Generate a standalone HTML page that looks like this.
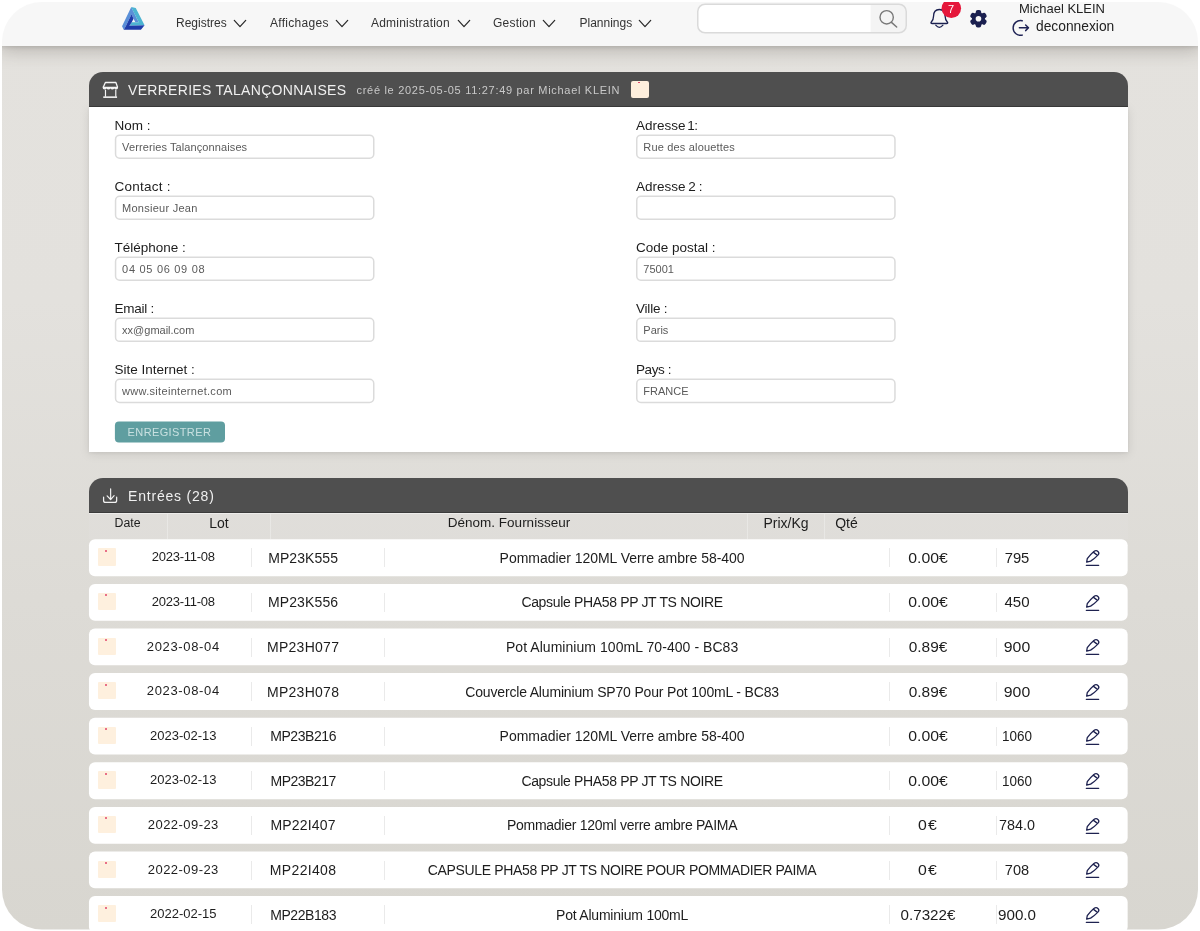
<!DOCTYPE html>
<html lang="fr">
<head>
<meta charset="utf-8">
<title>Verreries Talançonnaises</title>
<style>
*{box-sizing:border-box;margin:0;padding:0}
html,body{width:1200px;height:931px;background:#fff;overflow:hidden}
body{font-family:"Liberation Sans",sans-serif;color:#222;position:relative}
#frame{position:absolute;left:0;top:0;width:1200px;height:931px;
  clip-path:inset(2px 2px 1.4px 2px round 40px);
  background:linear-gradient(180deg,#e4e2de 0,#e3e1dd 300px,#dddbd6 600px,#d8d6d0 931px)}
.abs{position:absolute;white-space:nowrap}
#frame{will-change:transform}
/* navbar */
#nav{position:absolute;left:0;top:0;width:1200px;height:46px;background:#f7f7f7;
  box-shadow:0 1px 4px rgba(0,0,0,.12),0 5px 18px rgba(60,55,45,.26)}
.nv{position:absolute;top:16px;font-size:12px;line-height:15px;color:#333;white-space:nowrap}
.chev{position:absolute;top:19px;width:14px;height:9px}
.chev path{fill:none;stroke:#2a2a2a;stroke-width:1.25;stroke-linecap:round;stroke-linejoin:round}
/* panels */
.phead{position:absolute;left:89px;width:1039px;background:#4f4f4f;border-radius:14px 14px 0 0;border-bottom:1.2px solid #3b3b3b}
.pbody{position:absolute;left:89px;width:1039px;background:#fff;box-shadow:0 2px 10px rgba(0,0,0,.10),0 1px 3px rgba(0,0,0,.06)}
.lbl{position:absolute;font-size:13.5px;line-height:16px;color:#1d1d1d;white-space:nowrap}
.inp{position:absolute;width:260px;height:24px;font-size:11px;line-height:24px;color:#5a5a5a;padding-left:7.3px;white-space:nowrap}
/* table */
.th{position:absolute;top:515.3px;font-size:14px;line-height:16px;color:#1d1d1d;white-space:nowrap;transform:translateX(-50%)}
.row{position:absolute;left:89px;width:1038.5px;height:36.5px}
.row i{position:absolute;left:9px;top:9px;width:17.5px;height:17.3px;background:#fef0de;border-radius:1px}
.row i:after{content:"";position:absolute;left:7.4px;top:1.6px;width:2px;height:2px;border-radius:50%;background:#e2456a}
.row b{position:absolute;top:9px;width:1px;height:19px;background:#eaeaea}
.row span{position:absolute;font-weight:normal;white-space:nowrap;transform:translateX(-50%);color:#1d1d1d}
.row .d{left:94.3px;top:10px;font-size:13px;line-height:15px}
.row .l{left:214.1px;top:10.5px;font-size:14px;line-height:16px}
.row .n{left:533.1px;top:10.5px;font-size:14px;line-height:16px}
.row .p{left:838.8px;top:10.5px;font-size:14px;line-height:16px}
.row .q{left:928.1px;top:10.5px;font-size:14px;line-height:16px}
.row svg{position:absolute;left:981px;top:0.9px;width:50px;height:40px}
</style>
</head>
<body>
<div id="frame">

<!-- NAVBAR -->
<div id="nav">
  <!-- logo: penrose triangle -->
  <svg class="abs" style="left:110px;top:0;width:50px;height:40px" viewBox="0 0 1164 931">
    <polygon fill="#5a8fd8" points="495,165 280,610 320,695 370,605 537,260 502,331 548,438 590,520 669,520 505,185"/>
    <polygon fill="#4db4d2" points="495,165 600,185 805,590 450,600 506,520 669,520 505,190"/>
    <polygon fill="#1f3daa" points="502,331 548,438 506,520 450,600 805,590 720,695 320,695 370,605"/>
  </svg>
  <span class="nv" id="n1" style="left:176px">Registres</span>
  <svg class="chev" style="left:233px" viewBox="0 0 14 9"><path d="M1.3 1.4 L7 7.6 L12.7 1.4"/></svg>
  <span class="nv" id="n2" style="left:270px;letter-spacing:.3px">Affichages</span>
  <svg class="chev" style="left:335px" viewBox="0 0 14 9"><path d="M1.3 1.4 L7 7.6 L12.7 1.4"/></svg>
  <span class="nv" id="n3" style="left:371px;letter-spacing:.2px">Administration</span>
  <svg class="chev" style="left:457px" viewBox="0 0 14 9"><path d="M1.3 1.4 L7 7.6 L12.7 1.4"/></svg>
  <span class="nv" id="n4" style="left:493px;letter-spacing:.22px">Gestion</span>
  <svg class="chev" style="left:542px" viewBox="0 0 14 9"><path d="M1.3 1.4 L7 7.6 L12.7 1.4"/></svg>
  <span class="nv" id="n5" style="left:579.5px">Plannings</span>
  <svg class="chev" style="left:638px" viewBox="0 0 14 9"><path d="M1.3 1.4 L7 7.6 L12.7 1.4"/></svg>

  <!-- search -->
  <svg class="abs" style="left:690px;top:0;width:225px;height:40px" viewBox="690 0 225 40">
    <defs><clipPath id="sc"><rect x="697.75" y="4.25" width="208.5" height="28.5" rx="7.3"/></clipPath></defs>
    <g clip-path="url(#sc)"><rect x="697" y="3" width="174" height="32" fill="#fff"/><rect x="870.6" y="3" width="40" height="32" fill="#f4f4f4"/></g>
    <rect x="697.75" y="4.25" width="208.5" height="28.5" rx="7.3" fill="none" stroke="#dadada" stroke-width="1.5"/>
  </svg>
  <svg class="abs" style="left:850px;top:0;width:80px;height:40px" viewBox="0 0 1200 600">
    <circle cx="550" cy="260" r="100" fill="none" stroke="#787878" stroke-width="21"/>
    <path d="M622 335 L700 405" stroke="#787878" stroke-width="22" stroke-linecap="round"/>
  </svg>

  <!-- bell + badge + gear -->
  <svg class="abs" style="left:920px;top:0;width:80px;height:40px" viewBox="0 0 1200 600">
    <path d="M290 142 C225 142 203 195 203 245 C203 290 190 312 168 332 Q156 352 182 353 H398 Q424 352 412 332 C390 312 377 290 377 245 C377 195 355 142 290 142 Z" fill="none" stroke="#1b2050" stroke-width="20" stroke-linejoin="round"/>
    <path d="M236 378 Q290 440 344 378" fill="none" stroke="#1b2050" stroke-width="19" stroke-linecap="round"/>
    <circle cx="470" cy="125" r="146" fill="#e5173b"/>
    <g transform="translate(877,282)" fill="#1b2050">
      <circle r="98"/>
      <rect x="-41" y="-131" width="82" height="90" rx="30"/>
      <rect transform="rotate(60)" x="-41" y="-131" width="82" height="90" rx="30"/>
      <rect transform="rotate(120)" x="-41" y="-131" width="82" height="90" rx="30"/>
      <rect transform="rotate(180)" x="-41" y="-131" width="82" height="90" rx="30"/>
      <rect transform="rotate(240)" x="-41" y="-131" width="82" height="90" rx="30"/>
      <rect transform="rotate(300)" x="-41" y="-131" width="82" height="90" rx="30"/>
      <circle r="42" fill="#f7f7f7"/>
    </g>
  </svg>
  <span class="abs" style="left:948px;top:3px;font-size:11px;line-height:12px;color:#fff">7</span>

  <!-- user -->
  <span class="abs" id="usr" style="left:1019px;top:0.5px;font-size:13px;line-height:15px;color:#222">Michael KLEIN</span>
  <span class="abs" id="dec" style="left:1036px;top:18.5px;font-size:13.8px;line-height:16px;color:#222">deconnexion</span>
  <svg class="abs" style="left:1000px;top:0;width:130px;height:46px" viewBox="0 0 1200 425">
    <path d="M205 192 A68 68 0 1 0 205 324" fill="none" stroke="#1f2355" stroke-width="13" stroke-linecap="round"/>
    <path d="M178 257 H262 M236 231 L263 257 L236 283" fill="none" stroke="#1f2355" stroke-width="13" stroke-linecap="round" stroke-linejoin="round"/>
  </svg>
</div>

<!-- PANEL 1 -->
<div class="phead" style="top:72px;height:35px"></div>
<div class="pbody" style="top:107px;height:345px"></div>
<svg class="abs" style="left:95px;top:72px;width:40px;height:32px" viewBox="0 0 1164 931">
  <path d="M240 445 L302 305 H608 L657 445" fill="none" stroke="#f4f4f4" stroke-width="38" stroke-linejoin="round"/>
  <path d="M222 432 H672 V452 Q672 508 616 508 Q576 508 560 482 Q544 508 504 508 Q464 508 448 482 Q432 508 392 508 Q352 508 336 482 Q320 508 280 508 Q222 508 222 452 Z" fill="#f4f4f4"/>
  <path d="M305 520 V720 M605 520 V720" fill="none" stroke="#f4f4f4" stroke-width="34"/>
  <path d="M240 732 H642" fill="none" stroke="#f4f4f4" stroke-width="46"/>
</svg>
<span class="abs" id="ttl" style="left:128px;top:82px;font-size:14px;line-height:17px;letter-spacing:.3px;color:#f0f0f0">VERRERIES TALANÇONNAISES</span>
<span class="abs" id="sub" style="left:356.5px;top:83.5px;font-size:11px;line-height:13px;letter-spacing:.7px;color:#c9c9c9">créé le 2025-05-05 11:27:49 par Michael KLEIN</span>
<div class="abs" style="left:630.5px;top:80.5px;width:18px;height:17.5px;background:#fdeedc;border-radius:2px"></div>
<div class="abs" style="left:638.4px;top:81.8px;width:1.6px;height:1.6px;border-radius:50%;background:#e0305a"></div>

<!-- FORM -->
<svg class="abs" style="left:0;top:0;width:1200px;height:931px" viewBox="0 0 1200 931"><g fill="#fff" stroke="#dbdbdb" stroke-width="1.5"><rect x="115.55" y="135.15" width="258.2" height="23.05" rx="4.2"/><rect x="115.55" y="196.20" width="258.2" height="23.05" rx="4.2"/><rect x="115.55" y="257.25" width="258.2" height="23.05" rx="4.2"/><rect x="115.55" y="318.30" width="258.2" height="23.05" rx="4.2"/><rect x="115.55" y="379.35" width="258.2" height="23.05" rx="4.2"/><rect x="636.75" y="135.15" width="258.2" height="23.05" rx="4.2"/><rect x="636.75" y="196.20" width="258.2" height="23.05" rx="4.2"/><rect x="636.75" y="257.25" width="258.2" height="23.05" rx="4.2"/><rect x="636.75" y="318.30" width="258.2" height="23.05" rx="4.2"/><rect x="636.75" y="379.35" width="258.2" height="23.05" rx="4.2"/></g><rect x="114.9" y="421.4" width="110.1" height="21" rx="4" fill="#5f9ea0"/></svg>
<span class="lbl" style="left:114.5px;top:117.9px">Nom :</span>
<div class="inp" style="left:114.8px;top:134.70px"><span style="letter-spacing:.1px">Verreries Talançonnaises</span></div>
<span class="lbl" style="left:114.5px;top:178.9px;letter-spacing:.25px">Contact :</span>
<div class="inp" style="left:114.8px;top:195.75px"><span style="letter-spacing:.25px">Monsieur Jean</span></div>
<span class="lbl" style="left:114.5px;top:239.9px">Téléphone :</span>
<div class="inp" style="left:114.8px;top:256.80px"><span style="letter-spacing:.7px">04 05 06 09 08</span></div>
<span class="lbl" style="left:114.5px;top:300.9px;letter-spacing:-.25px">Email :</span>
<div class="inp" style="left:114.8px;top:317.85px">xx@gmail.com</div>
<span class="lbl" style="left:114.5px;top:361.9px">Site Internet :</span>
<div class="inp" style="left:114.8px;top:378.90px"><span style="letter-spacing:.3px">www.siteinternet.com</span></div>

<span class="lbl" style="left:636px;top:117.9px">Adresse<span style="word-spacing:-2px"> <span style="letter-spacing:-2.3px">1</span> :</span></span>
<div class="inp" style="left:636px;top:134.70px"><span style="letter-spacing:.18px">Rue des alouettes</span></div>
<span class="lbl" style="left:636px;top:178.9px;word-spacing:-.9px">Adresse 2 :</span>
<div class="inp" style="left:636px;top:195.75px"></div>
<span class="lbl" style="left:636px;top:239.9px">Code postal :</span>
<div class="inp" style="left:636px;top:256.80px">75001</div>
<span class="lbl" style="left:636px;top:300.9px;letter-spacing:-.2px">Ville :</span>
<div class="inp" style="left:636px;top:317.85px">Paris</div>
<span class="lbl" style="left:636px;top:361.9px;letter-spacing:-.4px">Pays :</span>
<div class="inp" style="left:636px;top:378.90px">FRANCE</div>

<div class="abs" id="btn" style="left:115px;top:422.4px;width:110px;height:21px;color:#c8e0e0;font-size:11px;line-height:21px;letter-spacing:.38px;padding-left:12.6px">ENREGISTRER</div>

<!-- PANEL 2 -->
<div class="phead" style="top:477.5px;height:35.5px"></div>
<svg class="abs" style="left:95px;top:480px;width:40px;height:32px" viewBox="0 0 1164 931">
  <path d="M250 500 V595 Q250 652 305 652 H575 Q630 652 630 595 V500" fill="none" stroke="#f2f2f2" stroke-width="36" stroke-linecap="round"/>
  <path d="M455 255 V565 M352 462 L455 568 L556 455" fill="none" stroke="#f2f2f2" stroke-width="34" stroke-linecap="round" stroke-linejoin="round"/>
</svg>
<span class="abs" id="ent" style="left:128px;top:487.8px;font-size:14px;line-height:17px;letter-spacing:.8px;color:#f0f0f0">Entrées (28)</span>

<!-- TABLE HEAD -->
<div class="abs" style="left:89px;top:513px;width:1039px;height:26.3px;background:rgba(255,255,255,.05)"></div>
<div class="abs" style="left:89px;top:513px;width:1039px;height:1px;background:rgba(255,255,255,.45)"></div>
<span class="abs" style="left:114.5px;top:515.5px;font-size:12.3px;line-height:15px;color:#1d1d1d">Date</span>
<span class="th" style="left:219px">Lot</span>
<span class="th" style="left:509px;font-size:13.5px">Dénom. Fournisseur</span>
<span class="th" style="left:786px">Prix/Kg</span>
<span class="th" style="left:846.5px">Qté</span>

<div class="abs" style="left:167px;top:514px;width:1px;height:25px;background:rgba(255,255,255,.3)"></div>
<div class="abs" style="left:270px;top:514px;width:1px;height:25px;background:rgba(255,255,255,.3)"></div>
<div class="abs" style="left:747px;top:514px;width:1px;height:25px;background:rgba(255,255,255,.3)"></div>
<div class="abs" style="left:824px;top:514px;width:1px;height:25px;background:rgba(255,255,255,.3)"></div>
<!-- ROWS -->
<div id="rows">
<svg class="abs" style="left:0;top:0;width:1200px;height:931px" viewBox="0 0 1200 931"><g fill="#fff"><rect x="88.95" y="539.30" width="1038.7" height="36.85" rx="6"/><rect x="88.95" y="583.90" width="1038.7" height="36.85" rx="6"/><rect x="88.95" y="628.50" width="1038.7" height="36.85" rx="6"/><rect x="88.95" y="673.10" width="1038.7" height="36.85" rx="6"/><rect x="88.95" y="717.70" width="1038.7" height="36.85" rx="6"/><rect x="88.95" y="762.30" width="1038.7" height="36.85" rx="6"/><rect x="88.95" y="806.90" width="1038.7" height="36.85" rx="6"/><rect x="88.95" y="851.50" width="1038.7" height="36.85" rx="6"/><rect x="88.95" y="896.10" width="1038.7" height="36.85" rx="6"/></g></svg>
<div class="row" style="top:539.30px"><i></i><span class="d" style="letter-spacing:-0.259px;margin-right:0.259px">2023-11-08</span><b style="left:162px"></b><span class="l" style="letter-spacing:0.076px;margin-right:-0.076px">MP23K555</span><b style="left:295px"></b><span class="n" style="letter-spacing:-0.033px;margin-right:0.033px">Pommadier 120ML Verre ambre 58-400</span><b style="left:800px"></b><span class="p" style="letter-spacing:0.025px;margin-right:-0.025px;transform:translateX(-50%) scaleX(1.130)">0.00€</span><b style="left:906.5px"></b><span class="q" style="letter-spacing:0px;margin-right:0px;transform:translateX(-50%) scaleX(1.057)">795</span><svg viewBox="0 0 1164 931"><g fill="none" stroke="#1e2250" stroke-width="30" stroke-linecap="round" stroke-linejoin="round"><path d="M388 515 L402 436 Q470 340 556 268 Q610 225 655 272 Q690 312 650 352 Q575 430 480 492 Z"/><path d="M548 288 L626 346"/><path d="M380 590 H668"/></g></svg></div>
<div class="row" style="top:583.90px"><i></i><span class="d" style="letter-spacing:-0.259px;margin-right:0.259px">2023-11-08</span><b style="left:162px"></b><span class="l" style="letter-spacing:0.133px;margin-right:-0.133px">MP23K556</span><b style="left:295px"></b><span class="n" style="letter-spacing:-0.338px;margin-right:0.338px">Capsule PHA58 PP JT TS NOIRE</span><b style="left:800px"></b><span class="p" style="letter-spacing:0.025px;margin-right:-0.025px;transform:translateX(-50%) scaleX(1.130)">0.00€</span><b style="left:906.5px"></b><span class="q" style="letter-spacing:0px;margin-right:0px;transform:translateX(-50%) scaleX(1.075)">450</span><svg viewBox="0 0 1164 931"><g fill="none" stroke="#1e2250" stroke-width="30" stroke-linecap="round" stroke-linejoin="round"><path d="M388 515 L402 436 Q470 340 556 268 Q610 225 655 272 Q690 312 650 352 Q575 430 480 492 Z"/><path d="M548 288 L626 346"/><path d="M380 590 H668"/></g></svg></div>
<div class="row" style="top:628.50px"><i></i><span class="d" style="letter-spacing:0.656px;margin-right:-0.656px">2023-08-04</span><b style="left:162px"></b><span class="l" style="letter-spacing:0.28px;margin-right:-0.28px">MP23H077</span><b style="left:295px"></b><span class="n" style="letter-spacing:0.053px;margin-right:-0.053px">Pot Aluminium 100mL 70-400 - BC83</span><b style="left:800px"></b><span class="p" style="letter-spacing:0px;margin-right:0px;transform:translateX(-50%) scaleX(1.102)">0.89€</span><b style="left:906.5px"></b><span class="q" style="letter-spacing:0px;margin-right:0px;transform:translateX(-50%) scaleX(1.130)">900</span><svg viewBox="0 0 1164 931"><g fill="none" stroke="#1e2250" stroke-width="30" stroke-linecap="round" stroke-linejoin="round"><path d="M388 515 L402 436 Q470 340 556 268 Q610 225 655 272 Q690 312 650 352 Q575 430 480 492 Z"/><path d="M548 288 L626 346"/><path d="M380 590 H668"/></g></svg></div>
<div class="row" style="top:673.10px"><i></i><span class="d" style="letter-spacing:0.656px;margin-right:-0.656px">2023-08-04</span><b style="left:162px"></b><span class="l" style="letter-spacing:0.28px;margin-right:-0.28px">MP23H078</span><b style="left:295px"></b><span class="n" style="letter-spacing:-0.176px;margin-right:0.176px">Couvercle Aluminium SP70 Pour Pot 100mL - BC83</span><b style="left:800px"></b><span class="p" style="letter-spacing:0px;margin-right:0px;transform:translateX(-50%) scaleX(1.102)">0.89€</span><b style="left:906.5px"></b><span class="q" style="letter-spacing:0px;margin-right:0px;transform:translateX(-50%) scaleX(1.130)">900</span><svg viewBox="0 0 1164 931"><g fill="none" stroke="#1e2250" stroke-width="30" stroke-linecap="round" stroke-linejoin="round"><path d="M388 515 L402 436 Q470 340 556 268 Q610 225 655 272 Q690 312 650 352 Q575 430 480 492 Z"/><path d="M548 288 L626 346"/><path d="M380 590 H668"/></g></svg></div>
<div class="row" style="top:717.70px"><i></i><span class="d" style="letter-spacing:0.011px;margin-right:-0.011px">2023-02-13</span><b style="left:162px"></b><span class="l" style="letter-spacing:-0.438px;margin-right:0.438px">MP23B216</span><b style="left:295px"></b><span class="n" style="letter-spacing:-0.033px;margin-right:0.033px">Pommadier 120ML Verre ambre 58-400</span><b style="left:800px"></b><span class="p" style="letter-spacing:0.025px;margin-right:-0.025px;transform:translateX(-50%) scaleX(1.130)">0.00€</span><b style="left:906.5px"></b><span class="q" style="letter-spacing:0px;margin-right:0px;transform:translateX(-50%) scaleX(0.963)">1060</span><svg viewBox="0 0 1164 931"><g fill="none" stroke="#1e2250" stroke-width="30" stroke-linecap="round" stroke-linejoin="round"><path d="M388 515 L402 436 Q470 340 556 268 Q610 225 655 272 Q690 312 650 352 Q575 430 480 492 Z"/><path d="M548 288 L626 346"/><path d="M380 590 H668"/></g></svg></div>
<div class="row" style="top:762.30px"><i></i><span class="d" style="letter-spacing:0.011px;margin-right:-0.011px">2023-02-13</span><b style="left:162px"></b><span class="l" style="letter-spacing:-0.51px;margin-right:0.51px">MP23B217</span><b style="left:295px"></b><span class="n" style="letter-spacing:-0.338px;margin-right:0.338px">Capsule PHA58 PP JT TS NOIRE</span><b style="left:800px"></b><span class="p" style="letter-spacing:0.025px;margin-right:-0.025px;transform:translateX(-50%) scaleX(1.130)">0.00€</span><b style="left:906.5px"></b><span class="q" style="letter-spacing:0px;margin-right:0px;transform:translateX(-50%) scaleX(0.963)">1060</span><svg viewBox="0 0 1164 931"><g fill="none" stroke="#1e2250" stroke-width="30" stroke-linecap="round" stroke-linejoin="round"><path d="M388 515 L402 436 Q470 340 556 268 Q610 225 655 272 Q690 312 650 352 Q575 430 480 492 Z"/><path d="M548 288 L626 346"/><path d="M380 590 H668"/></g></svg></div>
<div class="row" style="top:806.90px"><i></i><span class="d" style="letter-spacing:0.445px;margin-right:-0.445px">2022-09-23</span><b style="left:162px"></b><span class="l" style="letter-spacing:0.183px;margin-right:-0.183px">MP22I407</span><b style="left:295px"></b><span class="n" style="letter-spacing:-0.274px;margin-right:0.274px">Pommadier 120ml verre ambre PAIMA</span><b style="left:800px"></b><span class="p" style="letter-spacing:1.153px;margin-right:-1.153px;transform:translateX(-50%) scaleX(1.130)">0€</span><b style="left:906.5px"></b><span class="q" style="letter-spacing:0px;margin-right:0px;transform:translateX(-50%) scaleX(1.025)">784.0</span><svg viewBox="0 0 1164 931"><g fill="none" stroke="#1e2250" stroke-width="30" stroke-linecap="round" stroke-linejoin="round"><path d="M388 515 L402 436 Q470 340 556 268 Q610 225 655 272 Q690 312 650 352 Q575 430 480 492 Z"/><path d="M548 288 L626 346"/><path d="M380 590 H668"/></g></svg></div>
<div class="row" style="top:851.50px"><i></i><span class="d" style="letter-spacing:0.445px;margin-right:-0.445px">2022-09-23</span><b style="left:162px"></b><span class="l" style="letter-spacing:0.34px;margin-right:-0.34px">MP22I408</span><b style="left:295px"></b><span class="n" style="letter-spacing:-0.354px;margin-right:0.354px">CAPSULE PHA58 PP JT TS NOIRE POUR POMMADIER PAIMA</span><b style="left:800px"></b><span class="p" style="letter-spacing:1.153px;margin-right:-1.153px;transform:translateX(-50%) scaleX(1.130)">0€</span><b style="left:906.5px"></b><span class="q" style="letter-spacing:0px;margin-right:0px;transform:translateX(-50%) scaleX(1.040)">708</span><svg viewBox="0 0 1164 931"><g fill="none" stroke="#1e2250" stroke-width="30" stroke-linecap="round" stroke-linejoin="round"><path d="M388 515 L402 436 Q470 340 556 268 Q610 225 655 272 Q690 312 650 352 Q575 430 480 492 Z"/><path d="M548 288 L626 346"/><path d="M380 590 H668"/></g></svg></div>
<div class="row" style="top:896.10px"><i></i><span class="d" style="letter-spacing:0.011px;margin-right:-0.011px">2022-02-15</span><b style="left:162px"></b><span class="l" style="letter-spacing:-0.438px;margin-right:0.438px">MP22B183</span><b style="left:295px"></b><span class="n" style="letter-spacing:-0.214px;margin-right:0.214px">Pot Aluminium 100mL</span><b style="left:800px"></b><span class="p" style="letter-spacing:0px;margin-right:0px;transform:translateX(-50%) scaleX(1.083)">0.7322€</span><b style="left:906.5px"></b><span class="q" style="letter-spacing:0px;margin-right:0px;transform:translateX(-50%) scaleX(1.085)">900.0</span><svg viewBox="0 0 1164 931"><g fill="none" stroke="#1e2250" stroke-width="30" stroke-linecap="round" stroke-linejoin="round"><path d="M388 515 L402 436 Q470 340 556 268 Q610 225 655 272 Q690 312 650 352 Q575 430 480 492 Z"/><path d="M548 288 L626 346"/><path d="M380 590 H668"/></g></svg></div>
</div><!--endrows-->

</div>
</body>
</html>
